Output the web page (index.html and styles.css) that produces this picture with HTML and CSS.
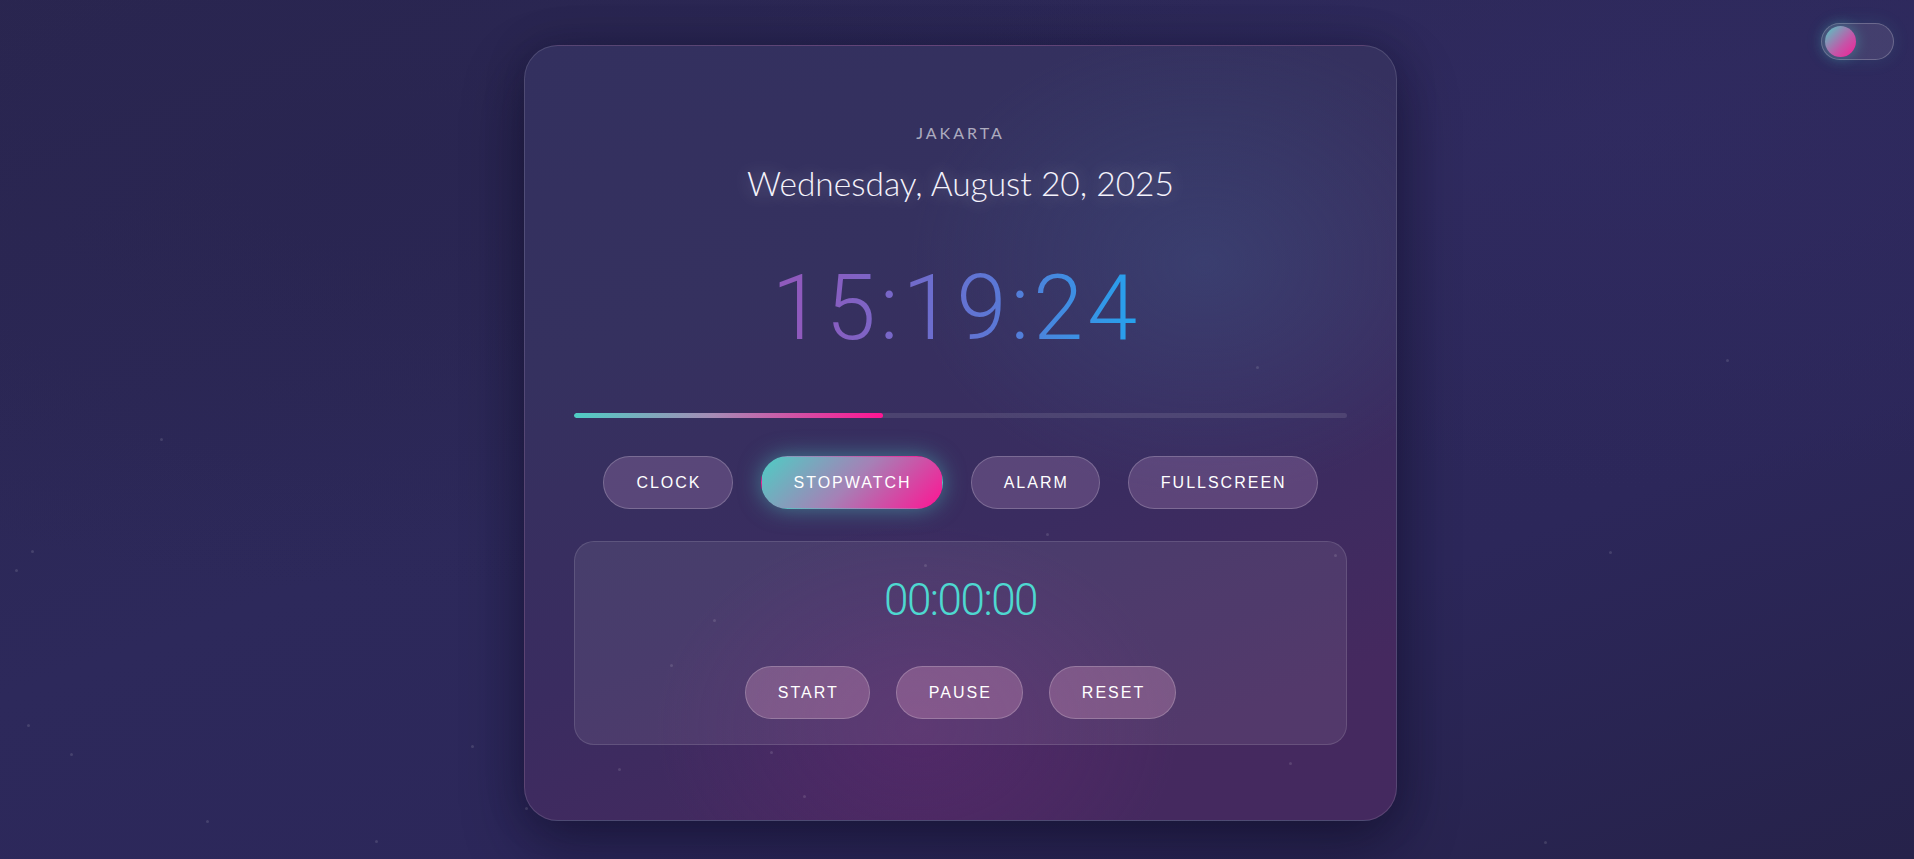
FILE: index.html
```html
<!DOCTYPE html>
<html lang="en">
<head>
<meta charset="utf-8">
<title>Clock</title>
<link rel="stylesheet" href="styles.css">
</head>
<body>
<div class="particles">
  <span class="dot" style="left:160px;top:438px"></span>
  <span class="dot" style="left:31px;top:550px"></span>
  <span class="dot" style="left:15px;top:569px"></span>
  <span class="dot" style="left:27px;top:724px"></span>
  <span class="dot" style="left:70px;top:753px"></span>
  <span class="dot" style="left:206px;top:820px"></span>
  <span class="dot" style="left:375px;top:840px"></span>
  <span class="dot" style="left:471px;top:745px"></span>
  <span class="dot" style="left:525px;top:807px"></span>
  <span class="dot" style="left:618px;top:768px"></span>
  <span class="dot" style="left:770px;top:751px"></span>
  <span class="dot" style="left:803px;top:795px"></span>
  <span class="dot" style="left:670px;top:664px"></span>
  <span class="dot" style="left:713px;top:619px"></span>
  <span class="dot" style="left:924px;top:564px"></span>
  <span class="dot" style="left:1046px;top:533px"></span>
  <span class="dot" style="left:1334px;top:554px"></span>
  <span class="dot" style="left:1289px;top:762px"></span>
  <span class="dot" style="left:1256px;top:366px"></span>
  <span class="dot" style="left:1609px;top:551px"></span>
  <span class="dot" style="left:1726px;top:359px"></span>
  <span class="dot" style="left:1544px;top:841px"></span>
</div>

<button class="theme-toggle" aria-label="Toggle theme"><span class="knob"></span></button>

<main class="page">
  <section class="card">
    <p class="location">JAKARTA</p>
    <p class="date">Wednesday, August 20, 2025</p>
    <div class="time">15:19:24</div>
    <div class="progress"><div class="progress-fill" style="width:40%"></div></div>

    <nav class="modes">
      <button class="pill">CLOCK</button>
      <button class="pill active">STOPWATCH</button>
      <button class="pill">ALARM</button>
      <button class="pill">FULLSCREEN</button>
    </nav>

    <div class="panel">
      <div class="sw-time">00:00:00</div>
      <div class="sw-actions">
        <button class="pill pill-sw">START</button>
        <button class="pill pill-sw">PAUSE</button>
        <button class="pill pill-sw">RESET</button>
      </div>
    </div>
  </section>
</main>
</body>
</html>
```

FILE: styles.css
```css
* { box-sizing: border-box; }

html, body {
  margin: 0;
  height: 100%;
}

body {
  position: relative;
  overflow: hidden;
  font-family: "Lato", "Open Sans", sans-serif;
  color: #fff;
  background:
    radial-gradient(ellipse 60% 70% at 20% 20%, rgba(40, 36, 78, 0.6), transparent 70%),
    radial-gradient(ellipse 50% 60% at 85% 15%, rgba(50, 44, 100, 0.5), transparent 70%),
    linear-gradient(160deg, #2a2650 0%, #2d295b 45%, #2c275a 70%, #26224a 100%);
}

.particles {
  position: absolute;
  inset: 0;
  pointer-events: none;
  z-index: 2;
}

.dot {
  position: absolute;
  width: 3px;
  height: 3px;
  border-radius: 50%;
  background: rgba(255, 255, 255, 0.12);
}

.theme-toggle {
  position: absolute;
  top: 23px;
  right: 20px;
  width: 73px;
  height: 37px;
  padding: 0 0 0 3px;
  border: 1px solid rgba(255, 255, 255, 0.22);
  border-radius: 19px;
  background: rgba(255, 255, 255, 0.1);
  display: flex;
  align-items: center;
  box-shadow: 0 0 18px rgba(78, 205, 196, 0.12);
  z-index: 3;
}

.knob {
  width: 31px;
  height: 31px;
  border-radius: 50%;
  background: linear-gradient(135deg, #4ecdc4 0%, #c455a8 60%, #f51f95 100%);
  box-shadow: 0 0 14px rgba(78, 205, 196, 0.45);
}

.page {
  display: flex;
  justify-content: center;
  padding: 45px 0 0 7px;
}

.card {
  width: 873px;
  border: 1px solid rgba(255, 255, 255, 0.13);
  border-radius: 34px;
  padding: 77px 49px 75px;
  text-align: center;
  background:
    radial-gradient(ellipse 45% 40% at 78% 28%, rgba(62, 80, 130, 0.45), transparent 75%),
    radial-gradient(ellipse 40% 35% at 45% 88%, rgba(110, 40, 120, 0.35), transparent 75%),
    linear-gradient(160deg, #33305f 0%, #35315f 30%, #3a2c60 60%, #45295f 85%, #44295f 100%);
  box-shadow: 0 25px 60px rgba(10, 8, 30, 0.45), 0 0 40px rgba(10, 8, 30, 0.2);
}

.location {
  margin: 0;
  font-family: "Lato", sans-serif;
  font-size: 16px;
  line-height: 20px;
  letter-spacing: 3px;
  color: rgba(255, 255, 255, 0.6);
}

.date {
  margin: 18px 0 0;
  font-family: "Lato", sans-serif;
  font-weight: 300;
  font-size: 33.5px;
  line-height: 44px;
  color: #f4f2fb;
  text-shadow: 0 0 18px rgba(255, 255, 255, 0.35);
}

.time {
  margin-top: 54px;
  padding-right: 8px;
  font-family: "Roboto", sans-serif;
  font-weight: 300;
  font-size: 90px;
  line-height: 100px;
  letter-spacing: 4px;
  background: linear-gradient(90deg, #8f5abd 30%, #5a78d6 55%, #1fa7f0 75%);
  -webkit-background-clip: text;
  background-clip: text;
  color: transparent;
}

.progress {
  margin-top: 54px;
  height: 5px;
  border-radius: 3px;
  background: rgba(255, 255, 255, 0.1);
  overflow: hidden;
}

.progress-fill {
  height: 100%;
  border-radius: 3px;
  background: linear-gradient(90deg, #4ecdc4 0%, #a68cb6 45%, #ff1493 100%);
}

.modes {
  margin-top: 38px;
  display: flex;
  justify-content: center;
  gap: 28px;
}

.pill {
  font-family: "Liberation Sans", Arial, sans-serif;
  font-size: 16px;
  line-height: 19px;
  letter-spacing: 2px;
  padding: 16px 30px 16px 32px;
  border-radius: 27px;
  border: 1px solid rgba(255, 255, 255, 0.2);
  background: rgba(225, 170, 225, 0.2);
  color: #fff;
}

.pill.active {
  border-color: transparent;
  background: linear-gradient(135deg, #4ecdc4 0%, #a680b6 50%, #ff1493 100%);
  box-shadow: 0 0 22px rgba(78, 205, 196, 0.5);
}

.panel {
  margin-top: 32px;
  border: 1px solid rgba(255, 255, 255, 0.12);
  border-radius: 20px;
  padding: 32px 0 25px;
  background: rgba(255, 255, 255, 0.08);
}

.sw-time {
  font-family: "Roboto", sans-serif;
  font-weight: 300;
  font-size: 44px;
  line-height: 52px;
  letter-spacing: -1.5px;
  color: #4ed8d0;
}

.sw-actions {
  margin-top: 40px;
  display: flex;
  justify-content: center;
  gap: 26px;
}

.pill-sw {
  background: rgba(250, 178, 215, 0.25);
}
```
